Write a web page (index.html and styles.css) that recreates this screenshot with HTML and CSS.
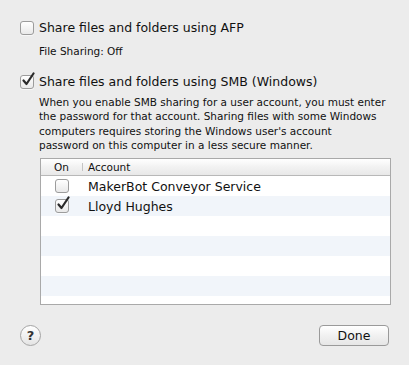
FILE: index.html
```html
<!DOCTYPE html>
<html lang="en">
<head>
    <meta charset="UTF-8">
    <title>File Sharing Options</title>
    <link rel="stylesheet" href="styles.css">
</head>
<body>
    <div class="sheet">
        <div class="option">
            <span class="box"></span>
            <span class="label">Share files and folders using AFP</span>
        </div>
        <p class="status">File Sharing: Off</p>

        <div class="option smb">
            <span class="box">
                <svg width="16" height="16" viewBox="0 0 16 16"><path d="M3.5 8.5 L6.5 12 L13.5 1.5" fill="none" stroke="#2a2a2a" stroke-width="2.2" stroke-linecap="round" stroke-linejoin="round"/></svg>
            </span>
            <span class="label">Share files and folders using SMB (Windows)</span>
        </div>
        <p class="note">When you enable SMB sharing for a user account, you must enter<br>the password for that account. Sharing files with some Windows<br>computers requires storing the Windows user's account<br>password on this computer in a less secure manner.</p>

        <div class="table">
            <div class="head">
                <span class="col-on">On</span>
                <span class="col-acc">Account</span>
            </div>
            <div class="row">
                <span class="col-on"><span class="box small"></span></span>
                <span class="col-acc">MakerBot Conveyor Service</span>
            </div>
            <div class="row alt">
                <span class="col-on"><span class="box small">
                    <svg width="16" height="16" viewBox="0 0 16 16"><path d="M3.5 8.5 L6.5 12 L13.5 1.5" fill="none" stroke="#2a2a2a" stroke-width="2.2" stroke-linecap="round" stroke-linejoin="round"/></svg>
                </span></span>
                <span class="col-acc">Lloyd Hughes</span>
            </div>
            <div class="row"></div>
            <div class="row alt"></div>
            <div class="row"></div>
            <div class="row alt"></div>
            <div class="row last"></div>
        </div>

        <div class="footer">
            <span class="help">?</span>
            <span class="done">Done</span>
        </div>
    </div>
</body>
</html>
```

FILE: styles.css
```css
body {
    margin: 0;
    background-color: #ececec;
    font-family: "DejaVu Sans", sans-serif;
    color: #111;
}

.sheet {
    padding: 20px 20px 0 20px;
}

.option {
    display: flex;
    align-items: center;
    gap: 5px;
    height: 15px;
    font-size: 12.5px;
}

.box {
    position: relative;
    box-sizing: border-box;
    width: 14px;
    height: 14px;
    border: 1px solid #9c9c9c;
    border-radius: 3px;
    background: linear-gradient(#ffffff, #e9e9e9);
    box-shadow: 0 1px 0 rgba(255, 255, 255, 0.6);
}

.box svg {
    position: absolute;
    left: -1px;
    top: -4px;
}

.status {
    margin: 10px 0 0 19px;
    font-size: 10.5px;
}

.smb {
    margin-top: 17px;
}

.note {
    margin: 6px 0 0 19px;
    font-size: 10.5px;
    line-height: 14.3px;
}

.table {
    margin: 6px 0 0 20px;
    width: 349px;
    border: 1px solid #a9a9a9;
    background-color: #fff;
    font-size: 12.5px;
}

.head {
    display: flex;
    align-items: center;
    height: 16px;
    border-bottom: 1px solid #b8b8b8;
    background: linear-gradient(#ffffff, #f2f2f2 50%, #e8e8e8);
    font-size: 10.5px;
}

.head .col-acc {
    border-left: 1px solid #c4c4c4;
    padding-left: 5px;
    height: 8px;
    line-height: 8px;
}

.col-on {
    width: 41px;
    display: flex;
    justify-content: center;
}

.row {
    display: flex;
    align-items: center;
    height: 20px;
}

.row .col-acc {
    padding-left: 6px;
}

.alt {
    background-color: #f1f5fa;
}

.last {
    height: 8px;
}

.footer {
    display: flex;
    justify-content: space-between;
    align-items: center;
    margin-top: 20px;
    width: 369px;
}

.help {
    box-sizing: border-box;
    width: 21px;
    height: 21px;
    border: 1px solid #a4a4a4;
    border-radius: 50%;
    background: linear-gradient(#ffffff, #e4e4e4);
    text-align: center;
    line-height: 19px;
    font-size: 13px;
    font-weight: bold;
    color: #333;
}

.done {
    box-sizing: border-box;
    width: 70px;
    height: 21px;
    border: 1px solid #9a9a9a;
    border-radius: 4px;
    background: linear-gradient(#ffffff, #f1f1f1 50%, #e6e6e6);
    text-align: center;
    line-height: 19px;
    font-size: 12.5px;
}
```
